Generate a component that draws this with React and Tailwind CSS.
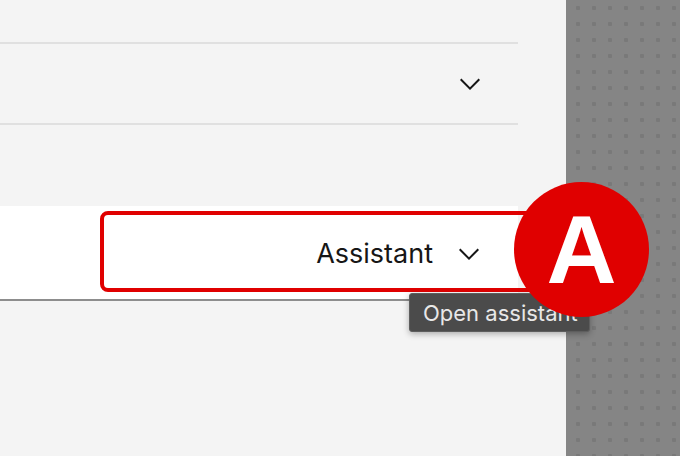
import React from 'react';

const ChevronDown = ({ className = '' }) => (
  <svg viewBox="0 0 32 32" width="32" height="32" className={className} fill="#161616">
    <path d="M16 22L6 12l1.4-1.4 8.6 8.6 8.6-8.6L26 12z" />
  </svg>
);

const App = () => {
  return (
    <div className="relative flex h-[456px] w-[680px] overflow-hidden bg-[#f4f4f4] font-['Inter',sans-serif]">
      {/* main column */}
      <div className="flex flex-1 flex-col pr-12">
        <div className="h-[44px] border-b-2 border-[#e0e0e0]" />
        <div className="flex h-[81px] items-center justify-end border-b-2 border-[#e0e0e0] pr-8">
          <ChevronDown />
        </div>
        <div className="h-[81px]" />
        <div className="flex h-[95px] items-center justify-end border-b-2 border-[#8d8d8d] bg-white pr-[33px] pt-[3px]">
          <span className="text-[27px] leading-normal text-[#161616]">Assistant</span>
          <ChevronDown className="ml-5" />
        </div>
      </div>

      {/* dotted side panel */}
      <div className="w-[114px] bg-[#858585] bg-[radial-gradient(circle,#797979_2px,transparent_2.5px)] bg-[size:16px_16px] bg-[position:4px_0px]" />

      {/* annotation outline */}
      <div className="pointer-events-none absolute left-[100px] top-[211px] h-[81px] w-[440px] rounded-lg border-4 border-[#e00000]" />

      {/* tooltip */}
      <div className="absolute left-[409px] top-[293px] flex h-[39px] w-[181px] items-center rounded-[3px] border border-[#5e5e5e] bg-[#4b4b4b] pl-[13px] shadow-[0_2px_6px_rgba(0,0,0,0.3)]">
        <span className="whitespace-nowrap text-[22px] leading-none text-[#e8e8e8]">Open assistant</span>
      </div>

      {/* annotation badge */}
      <div className="absolute left-[514px] top-[182px] flex h-[135px] w-[135px] items-center justify-center rounded-full bg-[#e00000]">
        <span className="font-['Liberation_Sans',sans-serif] text-[97px] font-bold leading-none text-white">A</span>
      </div>
    </div>
  );
};

export default App;
